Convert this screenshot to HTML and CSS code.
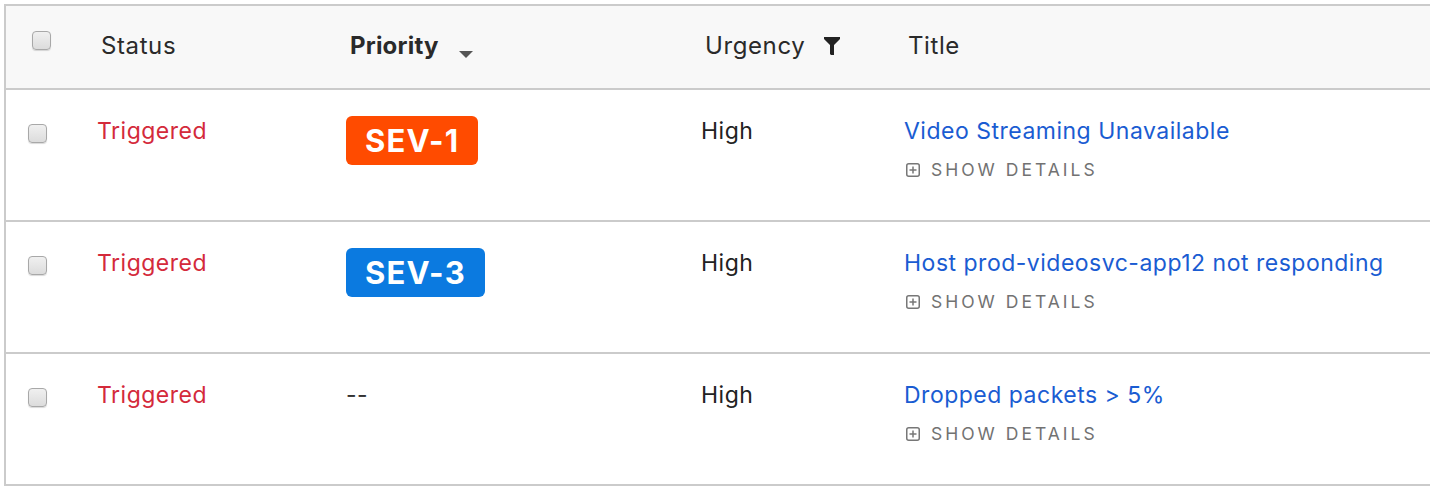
FILE: index.html
```html
<!DOCTYPE html>
<html>
<head>
<meta charset="utf-8">
<link rel="stylesheet" href="styles.css">
</head>
<body>
<div class="table">
  <div class="row head">
    <div class="cell c-check"><span class="checkbox"></span></div>
    <div class="cell c-status">Status</div>
    <div class="cell c-priority"><span class="bold">Priority</span><span class="caret"></span></div>
    <div class="cell c-urgency">Urgency<svg class="filter" width="16" height="18" viewBox="0 0 16 18"><path d="M0 0 H16 V2 L10 8 V18 H7 L6 17 V8 L0 2 Z" fill="#222"/></svg></div>
    <div class="cell c-title">Title</div>
  </div>

  <div class="row">
    <div class="cell c-check"><span class="checkbox"></span></div>
    <div class="cell c-status"><span class="triggered">Triggered</span></div>
    <div class="cell c-priority"><span class="badge sev1">SEV-1</span></div>
    <div class="cell c-urgency">High</div>
    <div class="cell c-title">
      <a class="link">Video Streaming Unavailable</a>
      <div class="details"><svg class="plus" width="14" height="14" viewBox="0 0 14 14"><rect x="0.75" y="0.75" width="12.5" height="12.5" rx="2" fill="none" stroke="#777" stroke-width="1.5"/><path d="M7 3.5V10.5M3.5 7H10.5" stroke="#777" stroke-width="1.5"/></svg>SHOW DETAILS</div>
    </div>
  </div>

  <div class="row">
    <div class="cell c-check"><span class="checkbox"></span></div>
    <div class="cell c-status"><span class="triggered">Triggered</span></div>
    <div class="cell c-priority"><span class="badge sev3">SEV-3</span></div>
    <div class="cell c-urgency">High</div>
    <div class="cell c-title">
      <a class="link">Host prod-videosvc-app12 not responding</a>
      <div class="details"><svg class="plus" width="14" height="14" viewBox="0 0 14 14"><rect x="0.75" y="0.75" width="12.5" height="12.5" rx="2" fill="none" stroke="#777" stroke-width="1.5"/><path d="M7 3.5V10.5M3.5 7H10.5" stroke="#777" stroke-width="1.5"/></svg>SHOW DETAILS</div>
    </div>
  </div>

  <div class="row">
    <div class="cell c-check"><span class="checkbox"></span></div>
    <div class="cell c-status"><span class="triggered">Triggered</span></div>
    <div class="cell c-priority"><span class="dash">--</span></div>
    <div class="cell c-urgency">High</div>
    <div class="cell c-title">
      <a class="link">Dropped packets &gt; 5%</a>
      <div class="details"><svg class="plus" width="14" height="14" viewBox="0 0 14 14"><rect x="0.75" y="0.75" width="12.5" height="12.5" rx="2" fill="none" stroke="#777" stroke-width="1.5"/><path d="M7 3.5V10.5M3.5 7H10.5" stroke="#777" stroke-width="1.5"/></svg>SHOW DETAILS</div>
    </div>
  </div>
</div>
</body>
</html>
```

FILE: styles.css
```css
html, body {
  margin: 0;
  padding: 0;
  background: #fff;
}
body {
  padding: 4px 0 0 4px;
  font-family: Inter, "Noto Sans", sans-serif;
  color: #222;
}
.table {
  border-left: 2px solid #cbcbcb;
  border-top: 2px solid #cbcbcb;
}
.row {
  display: grid;
  grid-template-columns: 85px 249px 355px 203px 1fr;
  height: 130px;
  border-bottom: 2px solid #cbcbcb;
  font-size: 23px;
  letter-spacing: 0.5px;
  line-height: 30px;
}
.row .cell {
  padding: 26px 0 0 6px;
}
.row .c-check {
  padding: 34px 0 0 22px;
}
.row.head {
  height: 82px;
  background: #f8f8f8;
  align-items: center;
  font-size: 24px;
  letter-spacing: 0.6px;
}
.row.head .cell {
  padding: 0 0 3px 10px;
  color: #2a2a2a;
}
.row.head .c-check {
  padding: 0 0 14px 26px;
  display: flex;
}
.row.head .c-priority .bold {
  letter-spacing: 0.2px;
}
.checkbox {
  display: block;
  width: 17px;
  height: 17px;
  border: 1px solid #a8a8a8;
  border-radius: 4px;
  background: linear-gradient(#f0f0f0, #dcdcdc);
  box-shadow: 0 1px 1px rgba(0,0,0,0.15);
}
.bold {
  font-weight: 700;
}
.caret {
  display: inline-block;
  width: 0;
  height: 0;
  border-left: 7px solid transparent;
  border-right: 7px solid transparent;
  border-top: 7px solid #555;
  margin-left: 20px;
  vertical-align: -4px;
}
.filter {
  margin-left: 19px;
  vertical-align: -1px;
}
.triggered {
  color: #d42a3b;
}
.badge {
  display: inline-block;
  color: #fff;
  font-weight: 700;
  font-size: 31px;
  line-height: 49px;
  height: 49px;
  padding: 0 19px;
  border-radius: 6px;
  letter-spacing: 1.2px;
  margin-top: 0;
}
.sev1 {
  background: #ff4b00;
}
.sev3 {
  background: #0b7ae0;
}
.dash {
  color: #333;
}
.link {
  color: #1a5cd2;
  text-decoration: none;
  display: block;
}
.details {
  margin-top: 13px;
  font-size: 17.5px;
  line-height: 22px;
  letter-spacing: 3px;
  color: #727272;
  display: flex;
  align-items: center;
}
.plus {
  margin-right: 11px;
  margin-left: 2px;
}
```
